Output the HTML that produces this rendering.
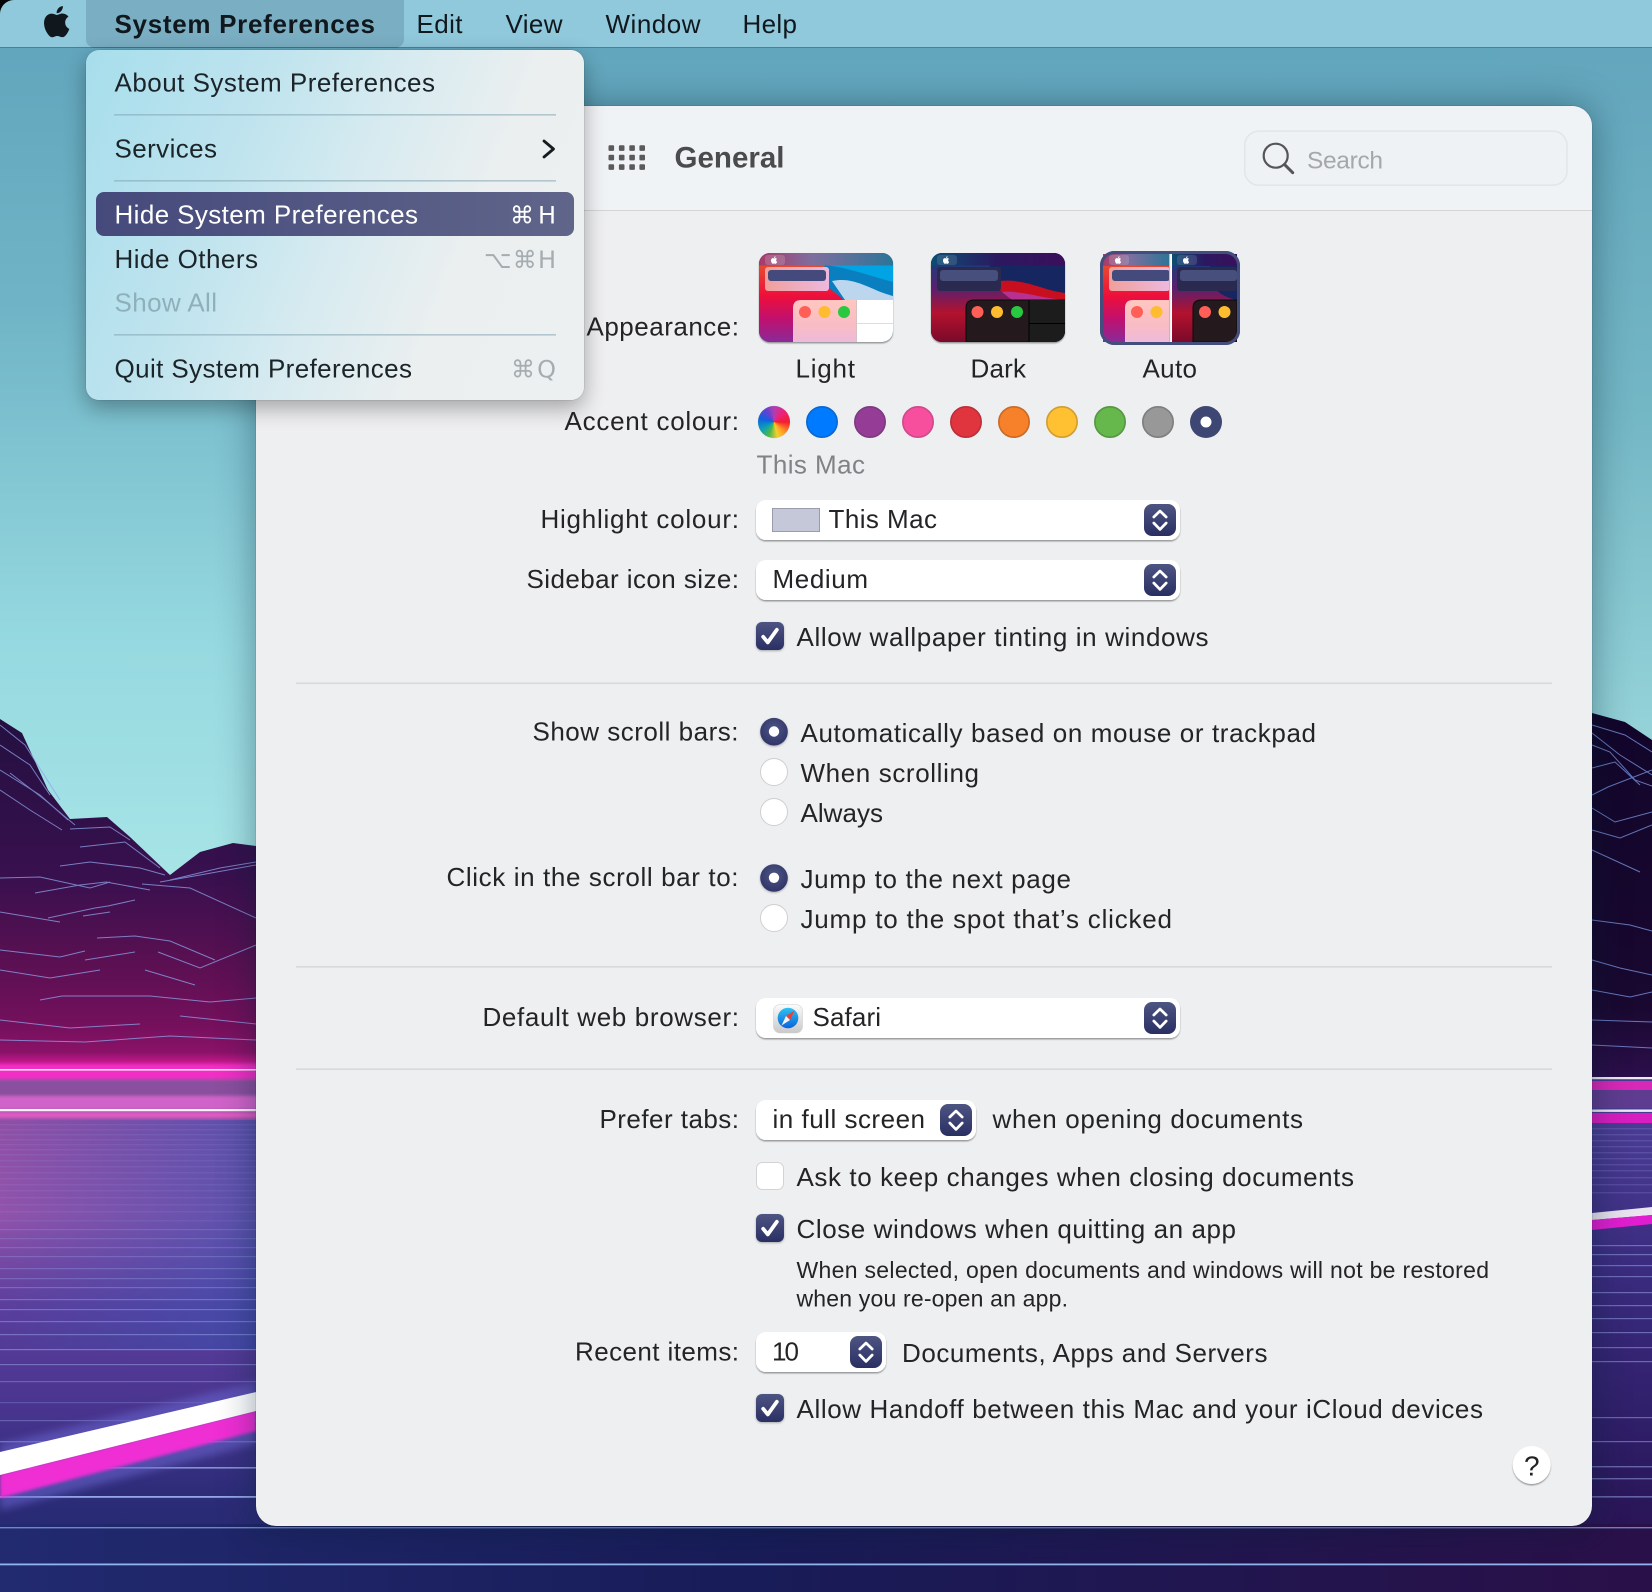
<!DOCTYPE html>
<html lang="en"><head><meta charset="utf-8"><title>System Preferences</title>
<style>
html,body{margin:0;padding:0;width:1652px;height:1592px;overflow:hidden;background:#222}
svg{position:absolute;left:0;top:0}
text{font-family:"Liberation Sans","DejaVu Sans",sans-serif;font-size:26px;fill:#242426;transform:translateY(.5px)}
#win{position:absolute;left:256px;top:105.5px;width:1336px;height:1420.5px;border-radius:20px;background:#eeeff1;box-shadow:0 0 38px rgba(0,30,50,.42),0 0 1px rgba(0,0,0,.5);overflow:hidden}
#tb{position:absolute;left:0;top:0;right:0;height:104px;background:#f0f3f6;border-bottom:1.5px solid #d3d5d7}
#multi{position:absolute;left:758px;top:406px;width:32px;height:32px;border-radius:50%;background:conic-gradient(#b03fb0 0deg,#f0207a 45deg,#f01f30 90deg,#ff9a20 135deg,#f4d030 165deg,#50b848 200deg,#0aa0b8 240deg,#1060e0 285deg,#6a40d0 330deg,#b03fb0 360deg)}
#menu{position:absolute;left:86px;top:50px;width:498px;height:350px;border-radius:13px;background:linear-gradient(112deg,#a7deec 0%,#bde3ee 28%,#d8ebf0 52%,#ebeff0 72%,#edf0f1 100%);box-shadow:0 8px 22px rgba(0,0,0,.32),0 0 1px rgba(0,0,0,.4)}
#hl{position:absolute;left:10px;top:142px;width:478px;height:44px;border-radius:8px;background:linear-gradient(90deg,#454a7c,#60658a)}
</style></head><body>
<svg width="1652" height="1592" viewBox="0 0 1652 1592">
<defs>
<linearGradient id="sky" x1="0" y1="48" x2="0" y2="900" gradientUnits="userSpaceOnUse"><stop offset="0" stop-color="#62a6bd"/><stop offset=".3" stop-color="#6fb4c6"/><stop offset=".7" stop-color="#96d9e0"/><stop offset="1" stop-color="#a8e5e7"/></linearGradient>
<linearGradient id="skyR" x1="0" y1="48" x2="0" y2="760" gradientUnits="userSpaceOnUse"><stop offset="0" stop-color="#63a6bd"/><stop offset=".5" stop-color="#73b6c4"/><stop offset="1" stop-color="#97d5da"/></linearGradient>
<linearGradient id="mtL" x1="0" y1="720" x2="0" y2="1066" gradientUnits="userSpaceOnUse"><stop offset="0" stop-color="#241040"/><stop offset=".45" stop-color="#38104e"/><stop offset=".7" stop-color="#5a1052"/><stop offset=".88" stop-color="#74105c"/><stop offset=".96" stop-color="#8a1268"/><stop offset="1" stop-color="#d81a98"/></linearGradient>
<linearGradient id="mtR" x1="0" y1="710" x2="0" y2="1078" gradientUnits="userSpaceOnUse"><stop offset="0" stop-color="#12052a"/><stop offset=".8" stop-color="#190830"/><stop offset="1" stop-color="#2b0f4a"/></linearGradient>
<linearGradient id="flL" x1="0" y1="1120" x2="0" y2="1592" gradientUnits="userSpaceOnUse"><stop offset="0" stop-color="#8f4fa6"/><stop offset=".2" stop-color="#9153ab"/><stop offset=".4" stop-color="#5a3e9c"/><stop offset=".62" stop-color="#48348e"/><stop offset=".8" stop-color="#2c2c78"/><stop offset="1" stop-color="#1f2668"/></linearGradient>
<linearGradient id="flH" x1="0" y1="0" x2="256" y2="0" gradientUnits="userSpaceOnUse"><stop offset="0" stop-color="#3a52b0" stop-opacity="0"/><stop offset="1" stop-color="#3a52b0" stop-opacity=".62"/></linearGradient>
<linearGradient id="flR" x1="0" y1="1125" x2="0" y2="1592" gradientUnits="userSpaceOnUse"><stop offset="0" stop-color="#4a3c92"/><stop offset=".3" stop-color="#3b2c80"/><stop offset=".65" stop-color="#2f1e68"/><stop offset="1" stop-color="#250f4a"/></linearGradient>
<linearGradient id="bot" x1="0" y1="0" x2="1652" y2="0" gradientUnits="userSpaceOnUse"><stop offset="0" stop-color="#222a70"/><stop offset=".45" stop-color="#181c58"/><stop offset="1" stop-color="#2a1048"/></linearGradient>
<filter id="g3"><feGaussianBlur stdDeviation="4"/></filter>
<filter id="g1"><feGaussianBlur stdDeviation="1.6"/></filter>
</defs>
<rect width="1652" height="1592" fill="#1f2668"/>
<rect x="0" y="48" width="1652" height="1020" fill="url(#sky)"/>
<rect x="1500" y="48" width="152" height="1020" fill="url(#skyR)"/>
<!-- left mountains -->
<polygon points="0,719 22,733 48,790 70,819 107,817 130,837 170,875 200,852 233,843 256,846 256,1068 0,1068" fill="url(#mtL)"/>
<g fill="none" stroke="#8ea4ea" stroke-width="1" opacity=".75">
<polyline points="0,725 25,745 60,800"/><polyline points="0,745 30,765 50,795"/><polyline points="0,770 40,795 68,820"/>
<polyline points="0,790 30,810 62,830"/><polyline points="10,773 45,800 75,825"/>
<polyline points="70,829 110,827 130,840"/><polyline points="80,847 125,842 160,868"/><polyline points="60,866 90,862 140,868 165,875"/>
<polyline points="0,878 40,877 90,888 110,882"/><polyline points="35,893 80,885 106,882 150,890"/><polyline points="48,918 95,908 108,906 135,900"/>
<polyline points="160,882 200,875 256,865"/><polyline points="170,880 220,868 256,862"/><polyline points="0,912 60,922"/>
<polyline points="83,916 110,912"/><polyline points="142,884 190,888 256,918"/><polyline points="97,938 135,936 170,941 215,960"/>
<polyline points="0,950 60,957 85,951"/><polyline points="85,960 135,952"/><polyline points="158,952 200,968 256,945"/>
<polyline points="0,970 50,978 100,970"/><polyline points="145,970 195,985"/><polyline points="40,1000 62,996 150,996 210,1002 256,998"/>
<polyline points="0,1020 70,1028 140,1024"/><polyline points="180,1016 256,1024"/><polyline points="0,1040 85,1042 170,1036 256,1040"/>
</g>
<!-- left floor -->
<rect x="0" y="1066" width="300" height="526" fill="url(#flL)"/>
<rect x="0" y="1120" width="256" height="230" fill="url(#flH)"/>
<g filter="url(#g1)">
<rect x="-5" y="1064" width="266" height="15" fill="#f22fc6"/>
<rect x="-5" y="1080" width="266" height="20" fill="#8a4f9e"/>
<rect x="-5" y="1096" width="266" height="14" fill="#dc66d0" opacity=".85"/>
<rect x="-5" y="1112" width="266" height="6" fill="#e45cc4"/>
</g>
<rect x="0" y="1069" width="256" height="1.6" fill="#ffe7f7"/>
<rect x="0" y="1109" width="256" height="2.2" fill="#fff4fb"/>
<g fill="#9ea8ec" opacity=".12">
<rect y="1124" width="256" height="1.4"/><rect y="1129" width="256" height="1.4"/><rect y="1134" width="256" height="1.4"/><rect y="1139" width="256" height="1.4"/><rect y="1144" width="256" height="1.4"/><rect y="1149" width="256" height="1.4"/><rect y="1154" width="256" height="1.4"/><rect y="1160" width="256" height="1.4"/><rect y="1166" width="256" height="1.4"/><rect y="1172" width="256" height="1.4"/><rect y="1178" width="256" height="1.4"/><rect y="1184" width="256" height="1.4"/><rect y="1190" width="256" height="1.4"/><rect y="1197" width="256" height="1.4"/><rect y="1204" width="256" height="1.4"/><rect y="1211" width="256" height="1.4"/><rect y="1220" width="256" height="1.4"/>
</g>
<g fill="#a0b4f2">
<rect y="1229" width="256" height="1.2" opacity=".22"/><rect y="1238" width="256" height="1.2" opacity=".22"/><rect y="1247" width="256" height="1.2" opacity=".25"/><rect y="1256" width="256" height="1.2" opacity=".28"/><rect y="1268" width="256" height="1.2" opacity=".3"/><rect y="1278" width="256" height="1.2" opacity=".3"/><rect y="1287" width="256" height="1.2" opacity=".35"/><rect y="1299" width="256" height="1.2" opacity=".4"/><rect y="1309" width="256" height="1.2" opacity=".42"/><rect y="1321" width="256" height="1.2" opacity=".42"/><rect y="1334" width="256" height="1.2" opacity=".45"/><rect y="1349" width="256" height="1.2" opacity=".5"/><rect y="1364" width="256" height="1.2" opacity=".45"/><rect y="1381" width="256" height="1.2" opacity=".35"/><rect y="1402" width="256" height="1.2" opacity=".25"/><rect y="1420" width="256" height="1.2" opacity=".35"/><rect y="1441" width="256" height="1.4" opacity=".5"/><rect y="1467" width="256" height="1.6" opacity=".75"/><rect y="1496" width="256" height="1.8" opacity=".9"/>
</g>
<!-- streak -->
<polygon points="0,1444 256,1382 256,1444 0,1510" fill="#6a66d0" opacity=".55" filter="url(#g3)"/>
<polygon points="0,1474 256,1410 256,1431 0,1498" fill="#ef2fd4" filter="url(#g1)"/>
<polygon points="0,1452 256,1392 256,1411 0,1475" fill="#fff"/>
<!-- right strip -->
<rect x="1560" y="1066" width="92" height="526" fill="url(#flR)"/>
<polygon points="1560,700 1592,713 1625,722 1652,740 1652,1080 1560,1080" fill="url(#mtR)"/>
<g fill="none" stroke="#7d9be8" stroke-width="1" opacity=".75">
<polyline points="1592,725 1625,735 1652,752"/><polyline points="1592,733 1620,755 1652,775"/><polyline points="1592,745 1610,752 1635,780 1652,786"/>
<polyline points="1592,768 1615,762 1640,785"/><polyline points="1592,795 1608,787 1652,770"/><polyline points="1592,808 1615,822 1652,812"/>
<polyline points="1592,830 1620,838 1652,825"/><polyline points="1592,850 1640,872"/><polyline points="1592,920 1630,925 1652,931"/>
<polyline points="1592,960 1620,968 1652,975"/><polyline points="1592,990 1630,997 1652,992"/><polyline points="1592,1020 1652,1022"/>
<polyline points="1592,1045 1652,1048"/>
</g>
<rect x="1592" y="1077" width="60" height="2.4" fill="#f1e9f1"/>
<rect x="1592" y="1081" width="60" height="9" fill="#d828b8"/>
<rect x="1592" y="1090" width="60" height="18" fill="#5f3c90"/>
<rect x="1592" y="1109.5" width="60" height="2.4" fill="#f1eaf3"/>
<rect x="1592" y="1113" width="60" height="10" fill="#d81ec0"/>
<g fill="#8d8ee0" opacity=".25"><rect x="1592" y="1128" width="60" height="1.4"/><rect x="1592" y="1134" width="60" height="1.4"/><rect x="1592" y="1140" width="60" height="1.4"/><rect x="1592" y="1146" width="60" height="1.4"/><rect x="1592" y="1152" width="60" height="1.4"/><rect x="1592" y="1158" width="60" height="1.4"/><rect x="1592" y="1164" width="60" height="1.4"/><rect x="1592" y="1170" width="60" height="1.4"/><rect x="1592" y="1177" width="60" height="1.4"/><rect x="1592" y="1184" width="60" height="1.4"/><rect x="1592" y="1192" width="60" height="1.4"/></g>
<polygon points="1592,1213 1652,1207 1652,1215 1592,1220" fill="#e9e3ef"/>
<polygon points="1592,1220 1652,1215 1652,1224 1592,1230" fill="#e01ed0"/>
<g fill="#a0aef0" opacity=".5"><rect x="1592" y="1245" width="60" height="1.2"/><rect x="1592" y="1254" width="60" height="1.2"/><rect x="1592" y="1265" width="60" height="1.2"/><rect x="1592" y="1276" width="60" height="1.2"/><rect x="1592" y="1292" width="60" height="1.2"/><rect x="1592" y="1305" width="60" height="1.2"/><rect x="1592" y="1318" width="60" height="1.2"/><rect x="1592" y="1332" width="60" height="1.2"/><rect x="1592" y="1347" width="60" height="1.2"/><rect x="1592" y="1361" width="60" height="1.2"/><rect x="1592" y="1417" width="60" height="1.2"/><rect x="1592" y="1441" width="60" height="1.2"/><rect x="1592" y="1466" width="60" height="1.4"/><rect x="1592" y="1478" width="60" height="1.4"/><rect x="1592" y="1496" width="60" height="1.6"/></g>
<!-- bottom strip -->
<rect x="0" y="1524" width="1652" height="68" fill="url(#bot)"/>
<rect x="0" y="1527" width="1652" height="1.4" fill="#8cb0e8" opacity=".7"/>
<rect x="0" y="1563.5" width="1652" height="1.8" fill="#8fb4ee"/>
<!-- menu bar -->
<rect x="0" y="0" width="1652" height="47.5" fill="#90c8dc"/>
<path d="M0 0H14A14 14 0 0 0 0 14Z" fill="#050505"/>
</svg>

<div id="win"><div id="tb"></div></div>

<svg width="1652" height="1592" viewBox="0 0 1652 1592">
<defs>
<linearGradient id="btn" x1="0" y1="0" x2="0" y2="1"><stop offset="0" stop-color="#4d5582"/><stop offset="1" stop-color="#2a2f63"/></linearGradient>
<radialGradient id="rad" cx=".5" cy=".4" r=".7"><stop offset="0" stop-color="#4f5785"/><stop offset="1" stop-color="#2a2f63"/></radialGradient>
<linearGradient id="sky1" x1="0" y1="0" x2="1" y2="0"><stop offset="0" stop-color="#a83a6a"/><stop offset=".4" stop-color="#7d6f9e"/><stop offset="1" stop-color="#2c7497"/></linearGradient>
<linearGradient id="sky2" x1="0" y1="0" x2="1" y2="0"><stop offset="0" stop-color="#0b4e74"/><stop offset=".5" stop-color="#2c1860"/><stop offset="1" stop-color="#3b0f5c"/></linearGradient>
<linearGradient id="redL" x1="0" y1="0" x2="0" y2="1"><stop offset="0" stop-color="#e84a30"/><stop offset=".4" stop-color="#ee0f3a"/><stop offset=".7" stop-color="#c0106e"/><stop offset="1" stop-color="#8a2a98"/></linearGradient>
<linearGradient id="redD" x1="0" y1="0" x2="0" y2="1"><stop offset="0" stop-color="#203a78"/><stop offset=".3" stop-color="#5a2070"/><stop offset=".62" stop-color="#b3122e"/><stop offset="1" stop-color="#7a0a2a"/></linearGradient>
<linearGradient id="pinkW" x1="0" y1="0" x2="0" y2="1"><stop offset="0" stop-color="#ffc7c0"/><stop offset=".6" stop-color="#f8bcc4"/><stop offset="1" stop-color="#eebada"/></linearGradient>
<linearGradient id="miniL" x1="0" y1="0" x2="1" y2="0"><stop offset="0" stop-color="#f0a09a"/><stop offset="1" stop-color="#eeb8de"/></linearGradient>
<linearGradient id="safC" x1="0" y1="0" x2="0" y2="1"><stop offset="0" stop-color="#2fc3f2"/><stop offset="1" stop-color="#0a63dc"/></linearGradient>
<linearGradient id="safB" x1="0" y1="0" x2="0" y2="1"><stop offset="0" stop-color="#fbfbfb"/><stop offset="1" stop-color="#c9c9c9"/></linearGradient>
<clipPath id="cL"><rect x="759" y="253" width="134" height="89" rx="11"/></clipPath>
<clipPath id="cD"><rect x="931" y="253" width="134" height="89" rx="11"/></clipPath>
<clipPath id="cAL"><rect x="1103" y="254" width="67" height="88"/></clipPath>
<clipPath id="cAR"><rect x="1172" y="254" width="65" height="88"/></clipPath>
<filter id="sh" x="-5%" y="-20%" width="110%" height="150%"><feDropShadow dx="0" dy="1.4" stdDeviation=".9" flood-color="#000" flood-opacity=".38"/></filter>
<filter id="sh2" x="-20%" y="-20%" width="140%" height="150%"><feDropShadow dx="0" dy="1" stdDeviation="1" flood-color="#000" flood-opacity=".3"/></filter>
<g id="st"><rect width="32" height="32" rx="8" fill="url(#btn)"/><path d="M9.8 13 16 7 22.2 13M9.8 19 16 25.4 22.2 19" fill="none" stroke="#fff" stroke-width="2.7" stroke-linecap="round" stroke-linejoin="round"/></g>
<g id="ck"><rect width="28" height="28" rx="6" fill="url(#btn)" filter="url(#sh2)"/><path d="M7.2 14.8 11.8 20.4 20.8 7.8" fill="none" stroke="#fff" stroke-width="3.8" stroke-linecap="round" stroke-linejoin="round"/></g>
<path id="ap" d="M18.71 19.5c-.83 1.24-1.71 2.45-3.05 2.47-1.34.03-1.77-.79-3.29-.79-1.53 0-2 .77-3.27.82-1.31.05-2.3-1.32-3.14-2.53C4.25 17 2.94 12.45 4.7 9.39c.87-1.52 2.43-2.48 4.12-2.51 1.28-.02 2.5.87 3.29.87.78 0 2.26-1.07 3.8-.91.65.03 2.47.26 3.64 1.98-.09.06-2.17 1.28-2.15 3.81.03 3.02 2.65 4.03 2.68 4.04-.03.07-.42 1.44-1.38 2.83M13 3.5c.73-.83 1.94-1.46 2.94-1.5.13 1.17-.34 2.35-1.04 3.19-.69.85-1.83 1.51-2.95 1.42-.15-1.15.41-2.35 1.05-3.11z"/>
</defs>

<!-- toolbar -->
<g fill="#5a5a5a">
<rect x="608.5" y="145.3" width="5.6" height="5.6" rx="1"/><rect x="618.9" y="145.3" width="5.6" height="5.6" rx="1"/><rect x="629.3" y="145.3" width="5.6" height="5.6" rx="1"/><rect x="639.4" y="145.3" width="5.6" height="5.6" rx="1"/>
<rect x="608.5" y="154.8" width="5.6" height="5.6" rx="1"/><rect x="618.9" y="154.8" width="5.6" height="5.6" rx="1"/><rect x="629.3" y="154.8" width="5.6" height="5.6" rx="1"/><rect x="639.4" y="154.8" width="5.6" height="5.6" rx="1"/>
<rect x="608.5" y="164.3" width="5.6" height="5.6" rx="1"/><rect x="618.9" y="164.3" width="5.6" height="5.6" rx="1"/><rect x="629.3" y="164.3" width="5.6" height="5.6" rx="1"/><rect x="639.4" y="164.3" width="5.6" height="5.6" rx="1"/>
</g>
<text x="674.5" y="167" textLength="110" style="font-size:29.5px;font-weight:bold;fill:#4a4b4c">General</text>
<rect x="1244.7" y="131.2" width="322.3" height="54" rx="14" fill="#eff2f5" stroke="#e3e6e9" stroke-width="1.6"/>
<circle cx="1275.7" cy="155.7" r="12" fill="none" stroke="#555" stroke-width="2.2"/>
<path d="M1284.6 164.6 1292.7 172.7" stroke="#555" stroke-width="3" stroke-linecap="round"/>
<text x="1307" y="168" textLength="76" style="fill:#a5a7a9;font-size:24.5px">Search</text>

<!-- Light thumbnail -->
<rect x="759" y="253" width="134" height="89" rx="11" fill="#000" filter="url(#sh)"/>
<g clip-path="url(#cL)">
<rect x="759" y="253" width="134" height="89" fill="#0a7fc0"/>
<path d="M825 265H893V282C870 276 850 268 825 265Z" fill="#00a4e4"/>
<path d="M832 281C855 276 870 290 893 296V300L845 300Z" fill="#bcd6ee"/>
<path d="M759 265H825C818 280 828 288 842 298L860 342H759Z" fill="url(#redL)"/>
<rect x="759" y="253" width="134" height="12.5" fill="url(#sky1)"/>
<rect x="765" y="255" width="20" height="10" rx="3" fill="#fff" opacity=".16"/>
<use href="#ap" transform="translate(769.5 255.5) scale(.38)" fill="#fff"/>
<rect x="765" y="267" width="64" height="24" rx="3" fill="url(#miniL)"/>
<rect x="768" y="270" width="58" height="11" rx="3" fill="#444b7c"/>
<path d="M793 342V308Q793 300 801 300H856V342Z" fill="url(#pinkW)"/>
<rect x="856" y="300" width="37" height="42" fill="#fff"/>
<rect x="856" y="300" width="1" height="42" fill="#d8c0c0"/>
<rect x="857" y="323" width="36" height="1" fill="#dddddd"/>
<circle cx="805" cy="312" r="6" fill="#ff5f57"/><circle cx="824.5" cy="312" r="6" fill="#febc2e"/><circle cx="844" cy="312" r="6" fill="#28c840"/>
</g>

<!-- Dark thumbnail -->
<rect x="931" y="253" width="134" height="89" rx="11" fill="#000" filter="url(#sh)"/>
<g clip-path="url(#cD)">
<rect x="931" y="253" width="134" height="89" fill="#152660"/>
<path d="M990 283C1020 275 1040 290 1065 293V304L1000 304Z" fill="#c80f20"/>
<path d="M1000 292C1020 290 1040 298 1065 300V306L1000 306Z" fill="#b040c0" opacity=".7"/>
<path d="M931 265H990C985 282 1005 295 1020 305L1030 342H931Z" fill="url(#redD)"/>
<rect x="931" y="253" width="134" height="12.5" fill="url(#sky2)"/>
<rect x="937" y="255" width="20" height="10" rx="3" fill="#fff" opacity=".12"/>
<use href="#ap" transform="translate(941.5 255.5) scale(.38)" fill="#fff"/>
<rect x="937" y="267" width="64" height="24" rx="3" fill="#2a2a50"/>
<rect x="940" y="270" width="58" height="11" rx="3" fill="#474f7c"/>
<path d="M966 342V308Q966 300 974 300H1065V342Z" fill="#241a1e" stroke="#0a0a0a" stroke-width="1"/>
<rect x="1029" y="300" width="36" height="42" fill="#1c1c1c"/>
<rect x="1028.5" y="300" width="1" height="42" fill="#000"/>
<rect x="1029" y="323" width="36" height="1" fill="#000"/>
<circle cx="977.5" cy="312" r="6" fill="#ff5f57"/><circle cx="997" cy="312" r="6" fill="#febc2e"/><circle cx="1017" cy="312" r="6" fill="#28c840"/>
</g>

<!-- Auto thumbnail -->
<rect x="1101.5" y="252.5" width="137" height="91" rx="13" fill="#fff" stroke="#444e7c" stroke-width="3"/>
<g clip-path="url(#cAL)">
<rect x="1103" y="254" width="67" height="88" fill="#0a7fc0"/>
<path d="M1103 265H1170V342H1103Z" fill="url(#redL)"/>
<rect x="1103" y="254" width="67" height="12" fill="url(#sky1)"/>
<rect x="1109" y="255" width="20" height="10" rx="3" fill="#fff" opacity=".16"/>
<use href="#ap" transform="translate(1113.5 255.5) scale(.38)" fill="#fff"/>
<rect x="1109" y="267" width="61" height="24" rx="3" fill="url(#miniL)"/>
<rect x="1112" y="270" width="58" height="11" rx="3" fill="#444b7c"/>
<path d="M1125 342V308Q1125 300 1133 300H1170V342Z" fill="url(#pinkW)"/>
<circle cx="1137" cy="312" r="6" fill="#ff5f57"/><circle cx="1156.5" cy="312" r="6" fill="#febc2e"/>
</g>
<rect x="1169" y="254" width="1.2" height="88" fill="#bbb"/>
<g clip-path="url(#cAR)">
<rect x="1172" y="254" width="65" height="88" fill="#152660"/>
<path d="M1172 265H1210C1210 285 1215 295 1237 300V342H1172Z" fill="url(#redD)"/>
<rect x="1172" y="254" width="65" height="12" fill="url(#sky2)"/>
<rect x="1177" y="255" width="20" height="10" rx="3" fill="#fff" opacity=".12"/>
<use href="#ap" transform="translate(1181.5 255.5) scale(.38)" fill="#fff"/>
<rect x="1177" y="267" width="60" height="24" rx="3" fill="#2a2a50"/>
<rect x="1180" y="270" width="57" height="11" rx="3" fill="#474f7c"/>
<path d="M1193 342V308Q1193 300 1201 300H1237V342Z" fill="#241a1e" stroke="#0a0a0a"/>
<circle cx="1205" cy="312" r="6" fill="#ff5f57"/><circle cx="1224.5" cy="312" r="6" fill="#febc2e"/>
</g>
<rect x="1101.5" y="252.5" width="137" height="91" rx="13" fill="none" stroke="#444e7c" stroke-width="3"/>

<text x="795.5" y="377" textLength="59.5">Light</text>
<text x="970.5" y="377" textLength="55.5">Dark</text>
<text x="1142.5" y="377" textLength="54.5">Auto</text>

<!-- Labels -->
<text x="586.5" y="335" textLength="152.5">Appearance:</text>
<text x="564.5" y="429.5" textLength="174.5">Accent colour:</text>
<text x="540.5" y="527.5" textLength="198.5">Highlight colour:</text>
<text x="526.5" y="587.5" textLength="212.5">Sidebar icon size:</text>
<text x="532.5" y="740" textLength="206">Show scroll bars:</text>
<text x="446.5" y="885.7" textLength="292">Click in the scroll bar to:</text>
<text x="482.5" y="1025.5" textLength="256.5">Default web browser:</text>
<text x="599.5" y="1127.5" textLength="139.5">Prefer tabs:</text>
<text x="575" y="1360" textLength="164">Recent items:</text>

<!-- accent circles -->
<circle cx="774" cy="422" r="15.5" fill="none" stroke="#000" stroke-opacity=".12" stroke-width="1.5"/>
<circle cx="822" cy="422" r="15.2" fill="#007aff" stroke="#0a68d0" stroke-width="1.6"/>
<circle cx="870" cy="422" r="15.2" fill="#953d96" stroke="#7d3a80" stroke-width="1.6"/>
<circle cx="918" cy="422" r="15.2" fill="#f74f9e" stroke="#cf4a88" stroke-width="1.6"/>
<circle cx="966" cy="422" r="15.2" fill="#e0343f" stroke="#bb3038" stroke-width="1.6"/>
<circle cx="1014" cy="422" r="15.2" fill="#f7812b" stroke="#c96a28" stroke-width="1.6"/>
<circle cx="1062" cy="422" r="15.2" fill="#ffc132" stroke="#d29d30" stroke-width="1.6"/>
<circle cx="1110" cy="422" r="15.2" fill="#66b84d" stroke="#549840" stroke-width="1.6"/>
<circle cx="1158" cy="422" r="15.2" fill="#989898" stroke="#7e7e7e" stroke-width="1.6"/>
<circle cx="1206" cy="422" r="16" fill="#3e4673"/><circle cx="1206" cy="422" r="5.5" fill="#fff"/>
<text x="756.5" y="473" textLength="108.5" style="fill:#808285">This Mac</text>

<!-- Dropdowns -->
<rect x="756" y="500" width="424" height="40" rx="10" fill="#fff" filter="url(#sh)"/>
<use href="#st" x="1144" y="504"/>
<rect x="772.5" y="508.5" width="47" height="23" fill="#c5c8d8" stroke="#9a9cab"/>
<text x="828.5" y="527.5" textLength="108.5">This Mac</text>
<rect x="756" y="560" width="424" height="40" rx="10" fill="#fff" filter="url(#sh)"/>
<use href="#st" x="1144" y="564"/>
<text x="772.5" y="587.5" textLength="95.5">Medium</text>
<use href="#ck" x="756" y="622"/>
<text x="796.5" y="645.5" textLength="412">Allow wallpaper tinting in windows</text>
<rect x="296" y="682.5" width="1256" height="1.6" fill="#d8d9db"/>

<!-- radios -->
<circle cx="774" cy="731.7" r="13.8" fill="url(#rad)" filter="url(#sh2)"/><circle cx="774" cy="731.5" r="5.2" fill="#fff"/>
<circle cx="774" cy="772" r="13.5" fill="#fff" stroke="#cfcfd1" stroke-width="1"/>
<circle cx="774" cy="812" r="13.5" fill="#fff" stroke="#cfcfd1" stroke-width="1"/>
<text x="800.5" y="741.7" textLength="515.5">Automatically based on mouse or trackpad</text>
<text x="800.5" y="781.7" textLength="178.5">When scrolling</text>
<text x="800.5" y="821.7" textLength="82.5">Always</text>
<circle cx="774" cy="878" r="13.8" fill="url(#rad)" filter="url(#sh2)"/><circle cx="774" cy="877.8" r="5.2" fill="#fff"/>
<circle cx="774" cy="918" r="13.5" fill="#fff" stroke="#cfcfd1" stroke-width="1"/>
<text x="800.5" y="887.7" textLength="270.5">Jump to the next page</text>
<text x="800.5" y="927.7" textLength="371.5">Jump to the spot that’s clicked</text>
<rect x="296" y="966" width="1256" height="1.6" fill="#d8d9db"/>

<rect x="756" y="998" width="424" height="40" rx="10" fill="#fff" filter="url(#sh)"/>
<use href="#st" x="1144" y="1002"/>
<rect x="773.5" y="1004.5" width="29" height="28.5" rx="6.5" fill="url(#safB)" stroke="#d0d0d0" stroke-width=".6"/>
<circle cx="788" cy="1018" r="10.3" fill="url(#safC)"/>
<path d="M794.5 1010.5 786 1016 790 1020Z" fill="#f04030"/><path d="M781.5 1025.5 786 1016 790 1020Z" fill="#f4f4f4"/>
<text x="812.5" y="1025.5" textLength="68.5">Safari</text>
<rect x="296" y="1068.4" width="1256" height="1.6" fill="#d8d9db"/>

<rect x="756" y="1100" width="220" height="40" rx="10" fill="#fff" filter="url(#sh)"/>
<use href="#st" x="940" y="1104"/>
<text x="772.5" y="1127.5" textLength="152.5">in full screen</text>
<text x="992.5" y="1127.5" textLength="310.5">when opening documents</text>
<rect x="756.5" y="1162.5" width="27" height="27" rx="6" fill="#fff" stroke="#d3d3d5"/>
<text x="796.5" y="1185.5" textLength="557.5">Ask to keep changes when closing documents</text>
<use href="#ck" x="756" y="1214"/>
<text x="796.5" y="1237.5" textLength="439.5">Close windows when quitting an app</text>
<text x="796.5" y="1277.7" textLength="692.5" style="font-size:23px">When selected, open documents and windows will not be restored</text>
<text x="796.5" y="1306" textLength="271.5" style="font-size:23px">when you re-open an app.</text>
<rect x="756" y="1332" width="130" height="40" rx="10" fill="#fff" filter="url(#sh)"/>
<use href="#st" x="850" y="1336"/>
<text x="772" y="1360" textLength="27">10</text>
<text x="902" y="1361.7" textLength="365.5">Documents, Apps and Servers</text>
<use href="#ck" x="756" y="1394"/>
<text x="796.5" y="1417.7" textLength="686.5">Allow Handoff between this Mac and your iCloud devices</text>
<circle cx="1531.7" cy="1465" r="19" fill="#fff" filter="url(#sh)"/>
<text x="1524" y="1475" textLength="15" style="font-size:28px;fill:#222">?</text>
</svg>
<div id="multi"></div>

<!-- Menu -->
<svg width="1652" height="1592" viewBox="0 0 1652 1592">
<rect x="86" y="0" width="318" height="47.5" rx="8" fill="#7aaec3"/>
<rect x="86" y="0" width="318" height="12" fill="#7aaec3"/>
<use href="#ap" transform="translate(38 2.9) scale(1.56)" fill="#10181d"/>
<text x="114.5" y="32.5" textLength="260.5" style="font-weight:bold;fill:#10181d">System Preferences</text>
<text x="416.5" y="32.5" textLength="46" style="fill:#10181d">Edit</text>
<text x="505.5" y="32.5" textLength="57" style="fill:#10181d">View</text>
<text x="605.5" y="32.5" textLength="95" style="fill:#10181d">Window</text>
<text x="742.5" y="32.5" textLength="54.5" style="fill:#10181d">Help</text>
</svg>
<div id="menu"><div id="hl"></div></div>
<svg width="1652" height="1592" viewBox="0 0 1652 1592">
<g fill="#82a4b0" opacity=".55"><rect x="114" y="114" width="442" height="1.6"/><rect x="114" y="180" width="442" height="1.6"/><rect x="114" y="334" width="442" height="1.6"/></g>
<text x="114.5" y="91" textLength="320.5" style="fill:#1b2428">About System Preferences</text>
<text x="114.5" y="157" textLength="102.5" style="fill:#1b2428">Services</text>
<path d="M544 141 553.5 149 544 157" fill="none" stroke="#151c20" stroke-width="2.8" stroke-linecap="round" stroke-linejoin="round"/>
<text x="114.5" y="223" textLength="303.5" style="fill:#fff">Hide System Preferences</text>
<text x="510" y="223" textLength="46" style="fill:#fff;font-family:'DejaVu Sans','Liberation Sans',sans-serif;font-size:24px">⌘H</text>
<text x="114.5" y="267.5" textLength="143.5" style="fill:#1b2428">Hide Others</text>
<text x="484" y="267.5" textLength="72" style="fill:#a5adb0;font-family:'DejaVu Sans','Liberation Sans',sans-serif;font-size:24px">⌥⌘H</text>
<text x="114.5" y="311" textLength="102.5" style="fill:#8fb0ba">Show All</text>
<text x="114.5" y="377" textLength="297.5" style="fill:#1b2428">Quit System Preferences</text>
<text x="511" y="377" textLength="45" style="fill:#a5adb0;font-family:'DejaVu Sans','Liberation Sans',sans-serif;font-size:24px">⌘Q</text>
</svg>
</body></html>
